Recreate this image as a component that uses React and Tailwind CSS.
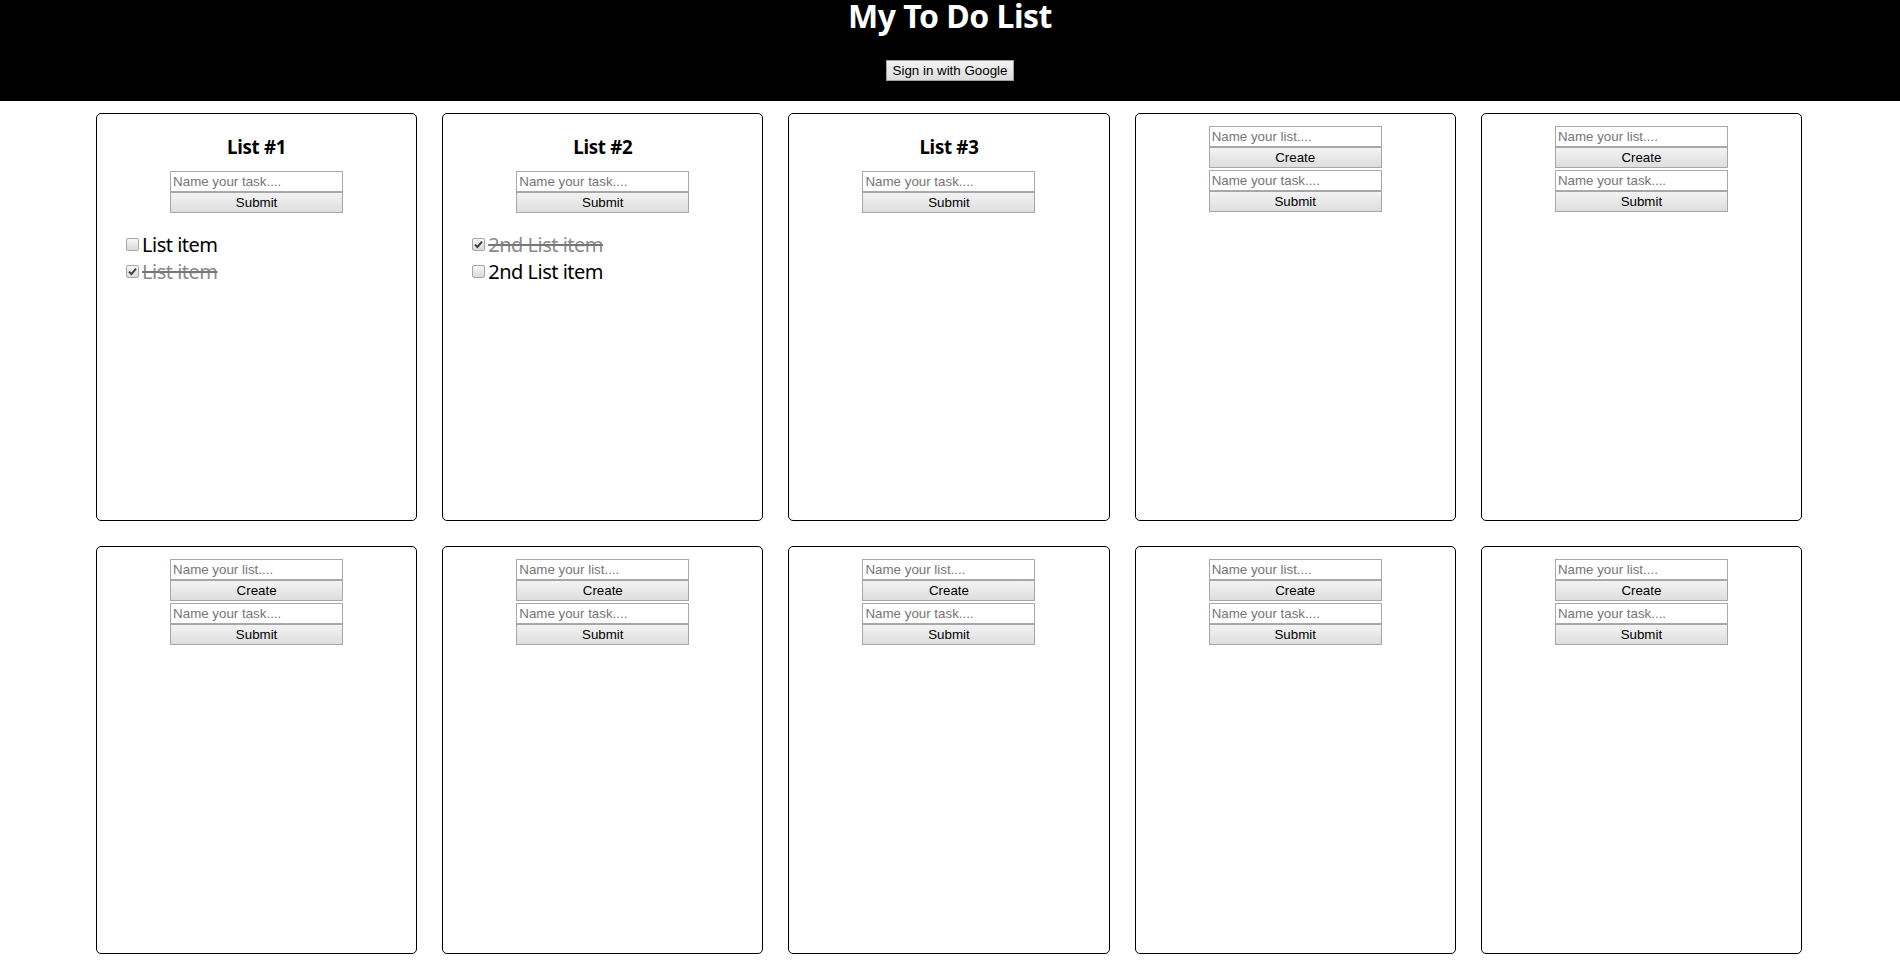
import { useState } from 'react';

const lists = [
  {
    title: 'List #1',
    items: [
      { text: 'List item', done: false },
      { text: 'List item', done: true },
    ],
  },
  {
    title: 'List #2',
    items: [
      { text: '2nd List item', done: true },
      { text: '2nd List item', done: false },
    ],
  },
  { title: 'List #3', items: [] },
  null,
  null,
  null,
  null,
  null,
  null,
  null,
];

const fieldCls =
  "block w-[173px] h-[21px] border border-[#a9a9a9] bg-white px-[2px] text-[13.33px] leading-[17px] text-black placeholder:text-[#757575] font-['Liberation_Sans',Arial,sans-serif] outline-none";
const btnCls =
  "block w-[173px] h-[21px] border border-[#a6a6a6] bg-gradient-to-b from-[#f3f3f3] to-[#dedede] text-[13.33px] leading-[17px] text-black font-['Liberation_Sans',Arial,sans-serif]";

const Checkbox = ({ checked, onChange }) => (
  <button
    onClick={onChange}
    className="mt-[7px] mr-[3px] w-[13px] h-[13px] shrink-0 rounded-[2px] border border-[#a6a6a6] bg-gradient-to-b from-[#f6f6f6] to-[#dadada] flex items-center justify-center"
  >
    {checked && (
      <svg width="9" height="9" viewBox="0 0 9 9">
        <path d="M1 4.6 L3.4 7 L8 1.6" fill="none" stroke="#3b3b3b" strokeWidth="1.9" />
      </svg>
    )}
  </button>
);

const ListCard = ({ list }) => {
  const [items, setItems] = useState(list ? list.items : []);

  const toggle = (i) =>
    setItems(items.map((it, j) => (j === i ? { ...it, done: !it.done } : it)));

  return (
    <div className="h-[408px] border border-black rounded-[5px] bg-white pt-3 flex flex-col items-center">
      {list ? (
        <h3 className="mt-[9px] mb-[12px] text-[18.7px] leading-[24px] font-bold text-black tracking-[-0.3px]">
          {list.title}
        </h3>
      ) : (
        <>
          <input className={fieldCls} placeholder="Name your list...." />
          <button className={btnCls}>Create</button>
          <div className="h-[2px]" />
        </>
      )}
      <input className={fieldCls} placeholder="Name your task...." />
      <button className={btnCls}>Submit</button>

      {items.length > 0 && (
        <ul className="self-stretch pl-[29px] mt-[18px]">
          {items.map((it, i) => (
            <li key={i} className="flex items-start text-[20px] leading-[27px] tracking-[-0.5px]">
              <Checkbox checked={it.done} onChange={() => toggle(i)} />
              <span className={it.done ? 'text-[#8a8a8a] line-through decoration-[#777]' : 'text-black'}>
                {it.text}
              </span>
            </li>
          ))}
        </ul>
      )}
    </div>
  );
};

export default function App() {
  return (
    <div className="min-h-screen bg-white font-['Noto_Sans',sans-serif]">
      {/* Header */}
      <header className="h-[101px] bg-black flex flex-col items-center">
        <h1 className="text-[32px] leading-[32px] font-bold text-white tracking-[-0.5px]">My To Do List</h1>
        <button className="mt-[28px] h-[21px] px-[6px] border border-[#a0a0a0] bg-gradient-to-b from-[#f3f3f3] to-[#dcdcdc] text-[13.33px] leading-[17px] text-black font-['Liberation_Sans',Arial,sans-serif]">
          Sign in with Google
        </button>
      </header>

      {/* Lists */}
      <div className="ml-[96px] mt-[12px] w-[1706px] grid grid-cols-5 gap-[25px] pb-[10px]">
        {lists.map((list, i) => (
          <ListCard key={i} list={list} />
        ))}
      </div>
    </div>
  );
}
